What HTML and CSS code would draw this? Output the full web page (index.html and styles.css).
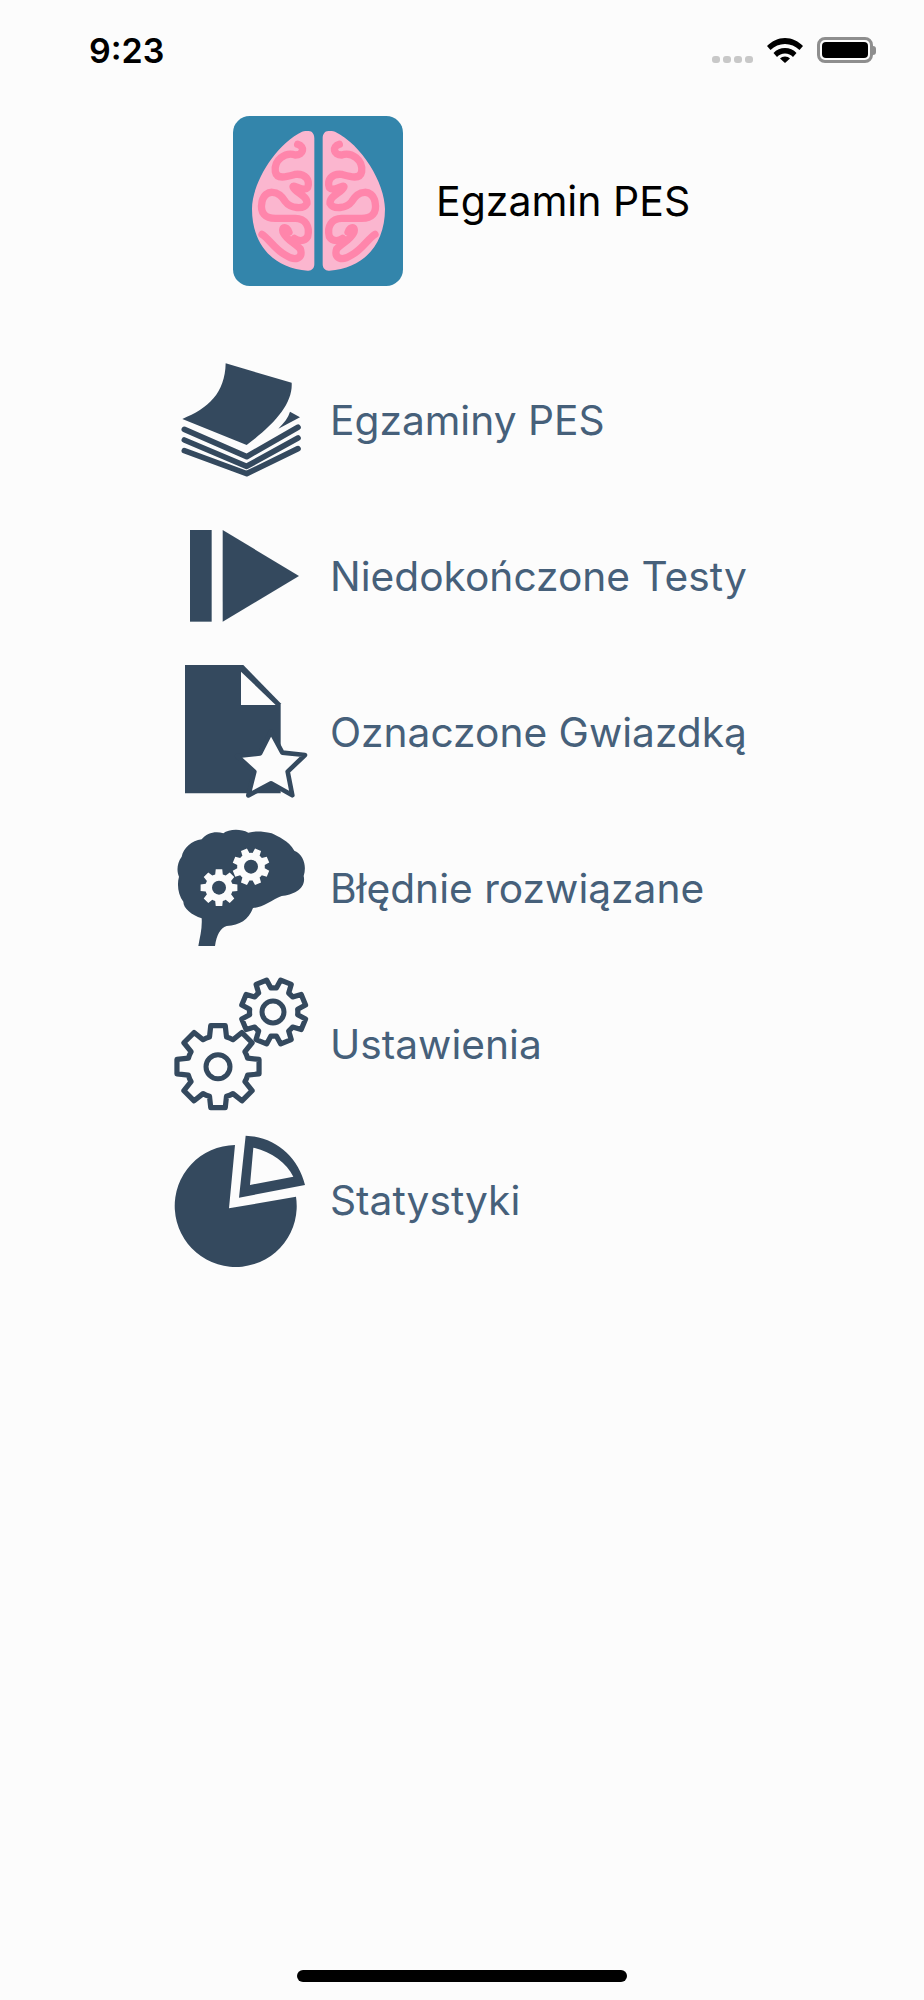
FILE: index.html
```html
<!DOCTYPE html>
<html lang="pl">
<head>
    <meta charset="UTF-8">
    <meta name="viewport" content="width=device-width, initial-scale=1.0">
    <title>Egzamin PES</title>
    <link rel="stylesheet" href="styles.css">
</head>
<body>

    <svg class="defs" width="0" height="0">
        <defs>
            <path id="gear" d="M-20.4 -71.1L-17.4 -98.5L17.4 -98.5L20.4 -71.1A74 74 0 0 1 35.9 -64.7L57.4 -81.9L81.9 -57.4L64.7 -35.9A74 74 0 0 1 71.1 -20.4L98.5 -17.4L98.5 17.4L71.1 20.4A74 74 0 0 1 64.7 35.9L81.9 57.4L57.4 81.9L35.9 64.7A74 74 0 0 1 20.4 71.1L17.4 98.5L-17.4 98.5L-20.4 71.1A74 74 0 0 1 -35.9 64.7L-57.4 81.9L-81.9 57.4L-64.7 35.9A74 74 0 0 1 -71.1 20.4L-98.5 17.4L-98.5 -17.4L-71.1 -20.4A74 74 0 0 1 -64.7 -35.9L-81.9 -57.4L-57.4 -81.9L-35.9 -64.7A74 74 0 0 1 -20.4 -71.1Z"/>
            <g id="lobe">
                <path class="lobe" d="M265 78C276 78 282 88 282 100L282 478C282 490 274 498 262 497C160 490 95 420 95 312C95 235 165 118 245 80C252 78 258 78 265 78Z"/>
                <path class="fold" d="M232 118C255 125 250 150 225 150C195 140 160 165 165 200C170 225 200 215 225 208C255 205 270 225 262 248C250 262 222 238 218 245C225 265 262 270 260 295C250 315 210 310 195 290C175 255 135 250 125 290C118 325 135 340 165 340L225 340C255 340 270 365 262 395C252 412 232 408 222 400"/>
                <path class="fold" d="M125 388C145 400 165 435 195 450C225 470 250 460 240 432C225 415 200 405 190 385C180 368 198 358 206 382"/>
            </g>
        </defs>
    </svg>

    <div class="status-bar">
        <span class="time">9:23</span>
        <div class="status-icons">
            <div class="signal"><i></i><i></i><i></i><i></i></div>
            <svg class="wifi" viewBox="0 0 36 25">
                <path d="M18 0C11 0 5 3 0 8L3.500 12C7.500 8.200 12.500 6 18 6C23.500 6 28.500 8.200 32.500 12L36 8C31 3 25 0 18 0Z"/>
                <path d="M18 10C13.500 10 9.500 11.800 6.500 15L10 19C12 16.800 14.800 15.500 18 15.500C21.200 15.500 24 16.800 26 19L29.500 15C26.500 11.800 22.500 10 18 10Z"/>
                <path d="M18 18.500C16 18.500 14.200 19.300 13 20.500L18 25L23 20.500C21.800 19.300 20 18.500 18 18.500Z"/>
            </svg>
            <div class="battery"><div class="battery-level"></div></div>
            <div class="battery-tip"></div>
        </div>
    </div>

    <div class="cabecera">
        <svg class="logo" viewBox="38 33 510 510">
            <rect x="38" y="33" width="510" height="510" rx="50" fill="#3385ab"/>
            <use href="#lobe"/>
            <use href="#lobe" transform="translate(589 0) scale(-1 1)"/>
        </svg>
        <h1>Egzamin PES</h1>
    </div>

    <ul class="menu">
        <li>
            <svg class="icono" viewBox="21 0 420 420">
                <path d="M182 40L380 98C384 160 330 222 245 285L52 207C130 175 180 130 182 40Z"/>
                <path d="M375 185L405 202L340 236C358 218 370 202 375 185Z"/>
                <g class="capas">
                    <path d="M58 238L245 320L399 232"/>
                    <path d="M58 270L245 349L399 264"/>
                    <path d="M58 302L245 371L399 296"/>
                </g>
            </svg>
            <span>Egzaminy PES</span>
        </li>
        <li>
            <svg class="icono" viewBox="21 468 420 420">
                <rect x="75" y="540" width="65" height="275"/>
                <path d="M173 540L402 678L173 815Z"/>
            </svg>
            <span>Niedokończone Testy</span>
        </li>
        <li>
            <svg class="icono" viewBox="21 36 420 420">
                <path d="M60 45L235 45L347 160L347 430L60 430Z"/>
                <path class="blanco" d="M228 65L228 165L332 165Z"/>
                <path class="estrella" d="M318 245L352 308L420 315L368 365L382 436L318 400L250 436L268 365L216 318L285 310Z"/>
            </svg>
            <span>Oznaczone Gwiazdką</span>
        </li>
        <li>
            <svg class="icono" viewBox="21 -6 420 420">
                <path d="M100 378L150 378C155 345 165 325 185 318C225 315 250 300 264 264C295 262 320 240 350 228C385 225 425 205 416 168C425 140 418 105 388 92C370 62 340 50 320 40C290 33 270 33 250 38C225 25 190 28 175 40C150 32 125 40 110 58C80 62 55 85 50 110C35 130 35 155 42 170C35 195 40 225 55 245C55 265 80 285 110 295C112 325 105 350 100 378Z"/>
                <use class="blanco" href="#gear" transform="translate(162 203) scale(.56)"/>
                <circle class="hueco" cx="162" cy="203" r="21"/>
                <use class="blanco" href="#gear" transform="translate(258 140) rotate(22.500) scale(.56)"/>
                <circle class="hueco" cx="258" cy="140" r="21"/>
            </svg>
            <span>Błędnie rozwiązane</span>
        </li>
        <li>
            <svg class="icono lineas" viewBox="21 27 420 420">
                <use href="#gear" transform="translate(159 305) scale(1.25)" stroke-width="12.500"/>
                <circle cx="159" cy="305" r="36"/>
                <use href="#gear" transform="translate(326 141) rotate(22.500) scale(.98)" stroke-width="16"/>
                <circle cx="324" cy="141" r="33"/>
            </svg>
            <span>Ustawienia</span>
        </li>
        <li>
            <svg class="icono" viewBox="21 495 420 420">
                <path d="M210 540L192 730L393 695A183 183 0 1 1 210 540Z"/>
                <path fill-rule="evenodd" d="M242 512C330 515 400 575 420 660L222 698ZM265 548L255 660L385 635C365 595 320 560 265 548Z"/>
            </svg>
            <span>Statystyki</span>
        </li>
    </ul>

    <div class="home-bar"></div>

</body>
</html>
```

FILE: styles.css
```css
body {
    margin: 0;
    height: 2000px;
    display: flex;
    flex-direction: column;
    background-color: #fcfcfc;
    font-family: Inter, "Liberation Sans", sans-serif;
}
.defs {
    position: absolute;
}
.status-bar {
    display: flex;
    justify-content: space-between;
    align-items: flex-start;
    height: 116px;
    padding: 37px 48px 0 89px;
    box-sizing: border-box;
}
.time {
    font-size: 34px;
    font-weight: 600;
    line-height: 28px;
    color: #000;
}
.status-icons {
    display: flex;
    align-items: flex-start;
}
.signal {
    display: flex;
    gap: 3px;
    margin: 19px 14px 0 0;
}
.signal i {
    width: 8px;
    height: 7px;
    border-radius: 3px;
    background: #c8c8c8;
}
.wifi {
    width: 36px;
    height: 25px;
    margin: 1px 14px 0 0;
}
.battery {
    width: 56px;
    height: 26px;
    padding: 2px;
    box-sizing: border-box;
    border: 3px solid #8e8e8e;
    border-radius: 8px;
}
.battery-level {
    height: 100%;
    background: #000;
    border-radius: 4px;
}
.battery-tip {
    width: 3px;
    height: 9px;
    margin-top: 9px;
    background: #8e8e8e;
    border-radius: 0 3px 3px 0;
}
.cabecera {
    display: flex;
    align-items: center;
    gap: 33px;
    padding-left: 233px;
}
.logo {
    width: 170px;
    height: 170px;
}
h1 {
    margin: 0;
    font-size: 41px;
    font-weight: 400;
    color: #000;
}
.lobe {
    fill: #fbb6cf;
}
.fold {
    fill: none;
    stroke: #ff85ab;
    stroke-width: 22;
    stroke-linecap: round;
    stroke-linejoin: round;
}
.menu {
    list-style: none;
    margin: 56px 0 0;
    padding: 0 0 0 172px;
}
.menu li {
    display: flex;
    align-items: center;
    gap: 18px;
    height: 156px;
    font-size: 40.700px;
    color: #46607a;
}
.icono {
    width: 140px;
    height: 140px;
    fill: #34495e;
    overflow: visible;
}
.capas path {
    fill: none;
    stroke: #34495e;
    stroke-width: 17;
    stroke-linecap: round;
    stroke-linejoin: round;
}
.blanco {
    fill: #fcfcfc;
}
.hueco {
    fill: #34495e;
}
.estrella {
    fill: #fcfcfc;
    stroke: #34495e;
    stroke-width: 14;
    stroke-linejoin: round;
}
.lineas {
    fill: none;
    stroke: #34495e;
    stroke-width: 15;
    stroke-linejoin: round;
}
.home-bar {
    width: 330px;
    height: 12px;
    margin: auto auto 18px;
    background: #000;
    border-radius: 6px;
}
```
